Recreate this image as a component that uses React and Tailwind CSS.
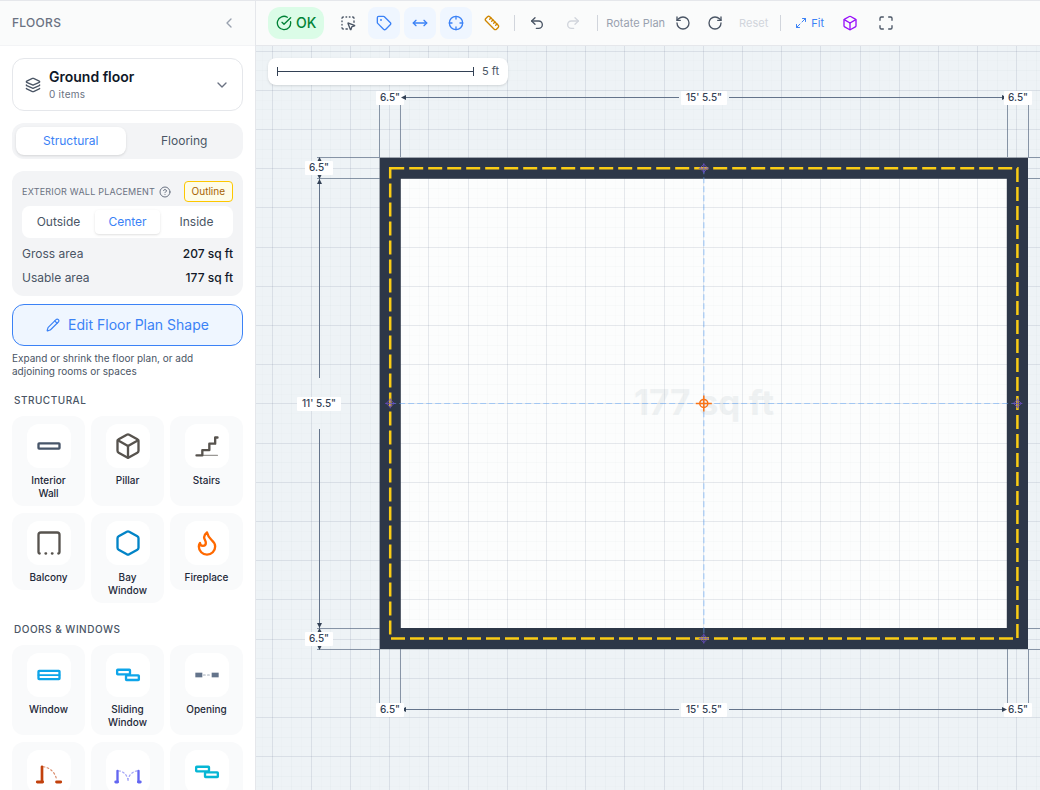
import React, { useState } from "react";
import {
  Box,
  ChevronDown,
  ChevronLeft,
  CircleCheckBig,
  CircleHelp,
  Crosshair,
  Flame,
  Hexagon,
  Layers,
  Maximize,
  Maximize2,
  MoveHorizontal,
  Pencil,
  Redo2,
  RotateCcw,
  RotateCw,
  Ruler,
  SquareDashedMousePointer,
  Tag,
  Undo2,
} from "lucide-react";

const Icon = ({ children, color }) => (
  <svg
    width="28"
    height="28"
    viewBox="0 0 24 24"
    fill="none"
    stroke={color}
    strokeWidth="2"
    strokeLinecap="round"
    strokeLinejoin="round"
  >
    {children}
  </svg>
);

const SlidingIcon = ({ color }) => (
  <Icon color={color}>
    <rect x="2.700" y="7.500" width="11" height="4" rx="0.500" />
    <rect x="10.300" y="12.300" width="11" height="4" rx="0.500" />
  </Icon>
);

const structural = [
  {
    name: "Interior Wall",
    icon: (
      <Icon color="#475569">
        <rect x="3" y="9.700" width="18" height="4.600" rx="0.500" />
      </Icon>
    ),
  },
  { name: "Pillar", icon: <Box size={28} color="#57534e" /> },
  {
    name: "Stairs",
    icon: (
      <Icon color="#57534e">
        <path d="M8 20H21" strokeWidth="1" opacity="0.6" />
        <path d="M3 20H8V15.500H14V10H19V4.700H21" />
      </Icon>
    ),
  },
  {
    name: "Balcony",
    icon: (
      <Icon color="#57534e">
        <path d="M4 21a1 1 0 0 1-1-1V5a2 2 0 0 1 2-2H19a2 2 0 0 1 2 2V20a1 1 0 0 1-1 1" />
        <path d="M9 21H9.500M14.500 21H15" />
      </Icon>
    ),
  },
  { name: "Bay Window", icon: <Hexagon size={28} color="#0284c7" /> },
  { name: "Fireplace", icon: <Flame size={28} color="#ff6900" /> },
];

const doors = [
  {
    name: "Window",
    icon: (
      <Icon color="#0ea5e9">
        <rect x="3" y="8.500" width="18" height="7" rx="0.500" />
        <path d="M3 12H21" strokeWidth="1.500" />
      </Icon>
    ),
  },
  { name: "Sliding Window", icon: <SlidingIcon color="#0ea5e9" /> },
  {
    name: "Opening",
    icon: (
      <Icon color="#64748b">
        <rect x="2" y="10" width="6" height="4" fill="#64748b" stroke="none" />
        <rect x="16" y="10" width="6" height="4" fill="#64748b" stroke="none" />
        <path d="M9 12H16" strokeWidth="1" strokeDasharray="1.500 2" opacity="0.6" />
      </Icon>
    ),
  },
  {
    name: "Hinged Door",
    icon: (
      <Icon color="#c2410c">
        <path d="M2 20.500H6.500M18.500 20.500H22" strokeWidth="2.500" />
        <path d="M6 20V7.500" strokeWidth="2.300" />
        <path
          d="M7 7.500A13 13 0 0 1 18.500 19"
          strokeWidth="1"
          strokeDasharray="1.500 2"
          opacity="0.6"
        />
      </Icon>
    ),
  },
  {
    name: "Double Door",
    icon: (
      <Icon color="#6366f1">
        <path d="M1.500 20.500H3M21 20.500H22.500" strokeWidth="2.500" />
        <path d="M3 20.500V11M21 20.500V11" />
        <path
          d="M4 11A9 9 0 0 1 12 20A9 9 0 0 1 20 11"
          strokeWidth="1"
          strokeDasharray="1.500 2"
          opacity="0.6"
        />
      </Icon>
    ),
  },
  { name: "Sliding Door", icon: <SlidingIcon color="#06b6d4" /> },
];

const ItemGrid = ({ title, items, className = "" }) => (
  <section>
    <h2 className="mb-2 ml-0.5 text-[10px] leading-[15px] font-medium tracking-wider text-gray-600">
      {title}
    </h2>
    <div className={`grid grid-cols-3 gap-x-1.5 gap-y-[7px] ${className}`}>
      {items.map((item) => (
        <button
          key={item.name}
          className="flex flex-col items-center gap-1.5 rounded-xl bg-[#f9fafb] px-2 pt-2 pb-1.5 text-[10px] leading-[13px] font-medium text-gray-800"
        >
          <span className="flex size-11 items-center justify-center rounded-xl bg-white">
            {item.icon}
          </span>
          <span className="max-w-13">{item.name}</span>
        </button>
      ))}
    </div>
  </section>
);

const Sidebar = () => {
  const [tab, setTab] = useState("Structural");
  const [placement, setPlacement] = useState("Center");

  return (
    <aside className="flex w-64 shrink-0 flex-col border-r border-gray-200 bg-white">
      <header className="flex h-[45px] shrink-0 items-center justify-between border-b border-gray-100 bg-[#fafbfb] px-3">
        <h1 className="text-xs font-medium tracking-wide text-gray-500">FLOORS</h1>
        <button aria-label="Collapse" className="mr-1.5 text-gray-400">
          <ChevronLeft size={16} />
        </button>
      </header>

      <div className="min-h-0 flex-1 overflow-y-auto p-3 [scrollbar-width:none]">
        <button className="flex h-[53px] w-full items-center gap-2 rounded-xl border border-gray-200 px-3 text-left">
          <Layers size={16} className="text-gray-600" />
          <span className="flex-1">
            <span className="block text-sm leading-[18px] font-semibold text-gray-900">Ground floor</span>
            <span className="block text-[10px] leading-4 tracking-wide text-gray-500">0 items</span>
          </span>
          <ChevronDown size={16} className="text-gray-500" />
        </button>

        <div className="mt-3 flex gap-1 rounded-xl bg-gray-100 p-1">
          {["Structural", "Flooring"].map((name) => (
            <button
              key={name}
              onClick={() => setTab(name)}
              className={`h-7 flex-1 rounded-lg text-xs ${
                tab === name ? "bg-white text-[#3b82f6] shadow-sm" : "text-gray-600"
              }`}
            >
              {name}
            </button>
          ))}
        </div>

        <section className="mt-3 rounded-xl bg-gray-100 px-2.5 pt-2.5 pb-1.5">
          <div className="flex items-center">
            <h2 className="text-[9px] tracking-wide whitespace-nowrap text-gray-500">
              EXTERIOR WALL PLACEMENT
            </h2>
            <CircleHelp size={12} className="ml-1 text-gray-500" />
            <button className="ml-auto h-[21px] rounded border border-yellow-400 bg-yellow-50 px-[7px] text-[10px] text-yellow-700">
              Outline
            </button>
          </div>
          <div className="mt-1 flex gap-1 rounded-lg bg-white p-1">
            {["Outside", "Center", "Inside"].map((name) => (
              <button
                key={name}
                onClick={() => setPlacement(name)}
                className={`h-6 flex-1 basis-0 rounded text-xs ${
                  placement === name ? "text-[#3b82f6] shadow-sm" : "text-gray-600"
                }`}
              >
                {name}
              </button>
            ))}
          </div>
          <dl className="mt-1 text-xs leading-6">
            <div className="flex justify-between">
              <dt className="text-gray-600">Gross area</dt>
              <dd className="font-medium text-gray-900">207 sq ft</dd>
            </div>
            <div className="flex justify-between">
              <dt className="text-gray-600">Usable area</dt>
              <dd className="font-medium text-gray-900">177 sq ft</dd>
            </div>
          </dl>
        </section>

        <button className="mt-2 flex h-[42px] w-full items-center justify-center gap-2 rounded-xl border border-[#3b82f6] bg-blue-50 text-sm text-[#3b82f6]">
          <Pencil size={14} />
          Edit Floor Plan Shape
        </button>
        <p className="mt-1.5 mb-[15px] pr-8 text-[10px] leading-[13px] text-gray-600">
          Expand or shrink the floor plan, or add adjoining rooms or spaces
        </p>

        <div className="flex flex-col gap-[19px]">
          <ItemGrid title="STRUCTURAL" items={structural} className="[&>*:nth-child(n+4)]:self-start" />
          <ItemGrid title="DOORS &amp; WINDOWS" items={doors} />
        </div>
      </div>
    </aside>
  );
};

const ToolButton = ({ label, className = "", children }) => (
  <button
    aria-label={label}
    className={`flex size-8 items-center justify-center rounded-lg ${className}`}
  >
    {children}
  </button>
);

const Divider = () => <span className="h-4 w-px bg-gray-300" />;

const Toolbar = () => (
  <div className="flex h-[45px] shrink-0 items-center border-b border-gray-200 bg-[#fafbfb] pl-3">
    <button className="mr-2 flex h-8 items-center gap-1 rounded-xl bg-green-100 px-2 text-sm font-medium text-green-700">
      <CircleCheckBig size={16} />
      OK
    </button>
    <div className="flex gap-1">
      <ToolButton label="Select" className="text-gray-600">
        <SquareDashedMousePointer size={16} />
      </ToolButton>
      <ToolButton label="Labels" className="bg-blue-50 text-[#3b82f6]">
        <Tag size={16} />
      </ToolButton>
      <ToolButton label="Dimensions" className="bg-blue-50 text-[#3b82f6]">
        <MoveHorizontal size={16} />
      </ToolButton>
      <ToolButton label="Snap" className="bg-blue-50 text-[#3b82f6]">
        <Crosshair size={16} />
      </ToolButton>
      <ToolButton label="Measure" className="text-yellow-600">
        <Ruler size={16} />
      </ToolButton>
    </div>
    <div className="ml-1.5 flex items-center">
      <Divider />
      <div className="mr-2 ml-1.5 flex gap-1">
        <ToolButton label="Undo" className="text-gray-600">
          <Undo2 size={16} />
        </ToolButton>
        <ToolButton label="Redo" className="text-gray-300">
          <Redo2 size={16} />
        </ToolButton>
      </div>
      <Divider />
    </div>
    <span className="ml-2 text-[11px] text-gray-400">Rotate Plan</span>
    <div className="ml-0.5 flex">
      <ToolButton label="Rotate left" className="text-gray-600">
        <RotateCcw size={16} />
      </ToolButton>
      <ToolButton label="Rotate right" className="text-gray-600">
        <RotateCw size={16} />
      </ToolButton>
    </div>
    <button className="mr-3 ml-2 text-[11px] text-gray-300">Reset</button>
    <Divider />
    <button className="mr-2.5 ml-3.5 flex items-center gap-1 text-[11px] text-[#3b82f6]">
      <Maximize2 size={12} />
      Fit
    </button>
    <div className="flex gap-1">
      <ToolButton label="3D view" className="text-purple-600">
        <Box size={16} />
      </ToolButton>
      <ToolButton label="Full screen" className="text-gray-600">
        <Maximize size={16} />
      </ToolButton>
    </div>
  </div>
);

// Pixels per foot, and the wall centre line in canvas coordinates
const FT = 39.2;
const LEFT = 134.2;
const TOP = 122.2;
const WIDTH = 16 * FT;
const HEIGHT = 12 * FT;

const GRID = Array.from({ length: 260 }, (_, i) => i - 16);

const gridColor = (i) => {
  if (i % 4 === 0) return "rgba(100,116,139,0.15)";
  if (i % 2 === 0) return "rgba(100,116,139,0.03)";
  return "rgba(100,116,139,0.015)";
};

const Grid = () => (
  <g>
    {GRID.map((i) => {
      const x = Math.round(LEFT + (i * FT) / 4) - 0.5;
      const y = Math.round(TOP + (i * FT) / 4) + 0.5;
      return (
        <g key={i} stroke={gridColor(i)}>
          <line x1={x} y1="0" x2={x} y2="100%" />
          <line x1="0" y1={y} x2="100%" y2={y} />
        </g>
      );
    })}
  </g>
);

const Label = ({ x, y, w, children }) => (
  <g>
    <rect x={x - w / 2} y={y - 7} width={w} height="14" rx="1" fill="#fff" />
    <text x={x} y={y + 3} textAnchor="middle" fontSize="10" fontWeight="500" fill="#334155">
      {children}
    </text>
  </g>
);

const rotation = { up: 0, right: 90, down: 180, left: 270 };

const Arrow = ({ x, y, dir }) => (
  <path
    d="M0 0L2.500 5H-2.500Z"
    fill="#334155"
    stroke="none"
    transform={`translate(${x} ${y}) rotate(${rotation[dir]})`}
  />
);

const Handle = ({ x, y }) => (
  <path
    d="M0 -4L4 0L0 4L-4 0ZM-5 0H5M0 -5V5"
    fill="none"
    stroke="#6d4fc4"
    strokeOpacity="0.8"
    transform={`translate(${x} ${y})`}
  />
);

const Dimensions = () => (
  <g stroke="#64748b">
    {/* extension lines */}
    <g strokeOpacity="0.75">
      <path d="M123.500 58V111M144.500 58V111M751.500 58V111M772.500 58V111" />
      <path d="M123.500 603V657M144.500 603V657M751.500 603V657M772.500 603V657" />
      <path d="M61 111.500H124M61 132.500H124M61 582.500H124M61 603.500H124" />
      <path d="M772 111.500H2000M772 132.500H2000M772 582.500H2000M772 603.500H2000" />
    </g>

    {/* measured spans */}
    <path d="M146 51.500H423M473 51.500H747M149 663.500H423M473 663.500H747" />
    <path d="M63.500 133V332M63.500 383V582" />

    <g stroke="none">
      <Arrow x={63.5} y={111} dir="up" />
      <Arrow x={63.5} y={133} dir="down" />
      <Arrow x={63.5} y={582} dir="up" />
      <Arrow x={63.5} y={604} dir="down" />
      <Arrow x={751} y={51.5} dir="right" />
      <Arrow x={145} y={663.5} dir="left" />

      <Label x={134} y={52} w={28}>6.5&quot;</Label>
      <Label x={448} y={52} w={46}>15&#39; 5.5&quot;</Label>
      <Label x={762} y={52} w={28}>6.5&quot;</Label>
      <Label x={134} y={664} w={28}>6.5&quot;</Label>
      <Label x={448} y={664} w={46}>15&#39; 5.5&quot;</Label>
      <Label x={762} y={664} w={28}>6.5&quot;</Label>
      <Label x={63} y={122} w={28}>6.5&quot;</Label>
      <Label x={63} y={358} w={44}>11&#39; 5.5&quot;</Label>
      <Label x={63} y={593} w={28}>6.5&quot;</Label>

      <Arrow x={145} y={51.5} dir="left" />
      <Arrow x={751} y={663.5} dir="right" />
      <Arrow x={63.5} y={133} dir="up" />
      <Arrow x={63.5} y={582} dir="down" />
    </g>
  </g>
);

const FloorPlan = () => {
  const cx = LEFT + WIDTH / 2;
  const cy = TOP + HEIGHT / 2;

  return (
    <svg className="block h-full w-full" role="img" aria-label="Floor plan">
      <rect x={LEFT} y={TOP} width={WIDTH} height={HEIGHT} fill="#fcfdfd" />
      <text
        x="448"
        y="369"
        textAnchor="middle"
        fontSize="35"
        fontWeight="700"
        fill="#eef1f2"
      >
        177 sq ft
      </text>
      <Grid />
      <rect
        x={LEFT}
        y={TOP}
        width={WIDTH}
        height={HEIGHT}
        fill="none"
        stroke="#2d3748"
        strokeWidth="21.2"
      />
      <rect
        x={LEFT}
        y={TOP}
        width={WIDTH}
        height={HEIGHT}
        fill="none"
        stroke="#facc15"
        strokeWidth="2.5"
        strokeDasharray="14 5"
      />
      <path
        d={`M${cx} ${TOP}V${TOP + HEIGHT}`}
        stroke="#60a5fa"
        strokeOpacity="0.4"
        strokeWidth="1.5"
        strokeDasharray="6 3"
      />
      <path
        d={`M${LEFT} 357.500H${LEFT + WIDTH}`}
        stroke="#60a5fa"
        strokeOpacity="0.5"
        strokeDasharray="6 3"
      />
      <Handle x={cx} y={TOP} />
      <Handle x={cx} y={TOP + HEIGHT} />
      <Handle x={LEFT} y={cy} />
      <Handle x={LEFT + WIDTH} y={cy} />
      <g fill="none" stroke="#f97316" strokeWidth="1.5">
        <circle cx={cx} cy={cy} r="4" />
        <path d={`M${cx - 8} ${cy}h16M${cx} ${cy - 8}v16`} />
      </g>
      <Dimensions />
    </svg>
  );
};

const ScaleBar = () => (
  <div className="absolute top-3 left-3 flex h-[27px] items-center gap-2 rounded-lg bg-white px-[9px] text-[11px] text-gray-600 shadow">
    <svg width="197" height="9" stroke="#334155">
      <path d="M0.500 0V9M196.500 0V9M0 4.500H197" />
    </svg>
    5 ft
  </div>
);

export default function App() {
  return (
    <div className="flex h-screen overflow-hidden border-t border-gray-200 bg-white font-[Inter,sans-serif]">
      <Sidebar />
      <main className="flex min-w-0 flex-1 flex-col">
        <Toolbar />
        <div className="relative min-h-0 flex-1 bg-[#eef3f6]">
          <FloorPlan />
          <ScaleBar />
        </div>
      </main>
    </div>
  );
}
